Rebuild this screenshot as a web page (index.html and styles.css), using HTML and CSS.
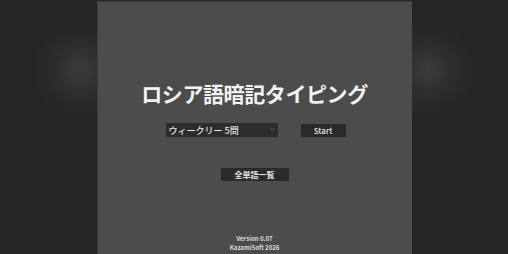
FILE: index.html
```html
<!DOCTYPE html>
<html lang="ja">
<head>
<meta charset="utf-8">
<link rel="stylesheet" href="styles.css">
</head>
<body>
<div class="glow glow-left"></div>
<div class="glow glow-right"></div>
<main class="panel">
  <h1 class="title">ロシア語暗記タイピング</h1>
  <div class="controls">
    <div class="select">
      <span>ウィークリー 5問</span>
      <svg class="chev" width="5" height="3" viewBox="0 0 5 3"><path d="M0.5 0.5 L2.5 2.5 L4.5 0.5" fill="none" stroke="#888" stroke-width="0.8"/></svg>
    </div>
    <button class="btn start">Start</button>
  </div>
  <button class="btn list">全単語一覧</button>
  <footer class="footer">
    <div>Version 0.07</div>
    <div>KazamiSoft 2026</div>
  </footer>
</main>
</body>
</html>
```
FILE: styles.css
```css
html, body {
  margin: 0;
  padding: 0;
  height: 100%;
}
body {
  background: #252525;
  font-family: "Noto Sans CJK JP", "Noto Sans", sans-serif;
  overflow: hidden;
  position: relative;
}
.glow {
  position: absolute;
  width: 100px;
  height: 100px;
  border-radius: 50%;
  background: radial-gradient(circle, rgba(75,75,75,0.6) 0%, rgba(60,60,60,0.35) 35%, rgba(37,37,37,0) 68%);
  top: 20px;
}
.glow-left { left: 30px; }
.glow-right { left: 378px; }
.panel {
  position: relative;
  width: 315px;
  margin: 0 auto;
  margin-top: 1px;
  height: 253px;
  box-sizing: border-box;
  background: #4c4c4c;
  border-top: 1px solid #3c3c3c;
  border-left: 1px solid #3e3e3e;
  display: flex;
  flex-direction: column;
  align-items: center;
  color: #eeeeee;
}
.title {
  margin: 75px 0 0 0;
  font-size: 21px;
  font-weight: 700;
  line-height: 32px;
  letter-spacing: -0.4px;
  color: #f2f2f2;
  white-space: nowrap;
}
.controls {
  display: flex;
  align-items: center;
  gap: 23px;
  margin-top: 14px;
}
.select {
  width: 112px;
  height: 14px;
  box-sizing: border-box;
  background: #2c2c2c;
  display: flex;
  align-items: center;
  justify-content: space-between;
  padding: 0 3px 0 3px;
  font-size: 9px;
  font-weight: 500;
  color: #e2e2e2;
  margin-left: 2px;
}
.chev { margin-bottom: 1px; }
.btn {
  border: none;
  background: #2a2a2a;
  color: #e2e2e2;
  font-family: inherit;
  padding: 0;
  height: 13px;
  font-size: 8px;
  font-weight: 500;
  line-height: 13px;
}
.start {
  width: 45px;
}
.list {
  width: 68px;
  margin-top: 31px;
  font-weight: 700;
}
.footer {
  margin-top: auto;
  margin-bottom: 2px;
  text-align: center;
  font-size: 6px;
  font-weight: 700;
  line-height: 9px;
  color: #dcdcdc;
}
```
